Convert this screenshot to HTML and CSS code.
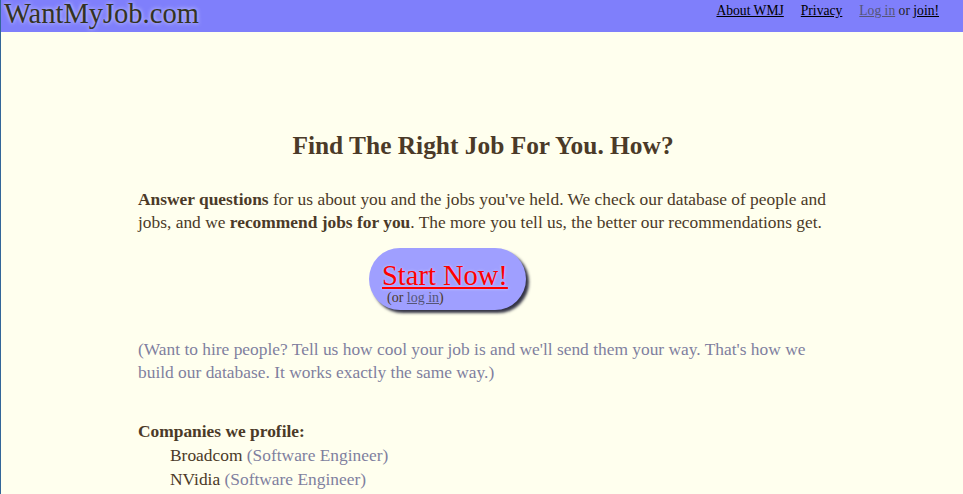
FILE: index.html
```html
<!DOCTYPE html>
<html>
<head>
<meta charset="utf-8">
<title>WantMyJob.com</title>
<link rel="stylesheet" href="styles.css">
</head>
<body>
<header class="topbar">
  <div class="logo">WantMyJob.com</div>
  <nav class="nav">
    <a href="#" class="nav-link">About WMJ</a>
    <a href="#" class="nav-link">Privacy</a>
    <span class="nav-auth"><a href="#" class="nav-login">Log in</a> or <a href="#" class="nav-link">join!</a></span>
  </nav>
</header>
<main class="content">
  <h1 class="headline">Find The Right Job For You. How?</h1>
  <p class="intro"><b>Answer questions</b> for us about you and the jobs you've held. We check our database of people and jobs, and we <b>recommend jobs for you</b>. The more you tell us, the better our recommendations get.</p>
  <div class="cta-row">
    <div class="cta">
      <a href="#" class="cta-main">Start Now!</a>
      <div class="cta-sub">(or <a href="#" class="cta-login">log in</a>)</div>
    </div>
  </div>
  <p class="aside">(Want to hire people? Tell us how cool your job is and we'll send them your way. That's how we build our database. It works exactly the same way.)</p>
  <div class="companies">
    <div class="companies-title">Companies we profile:</div>
    <ul class="company-list">
      <li>Broadcom <span class="role">(Software Engineer)</span></li>
      <li>NVidia <span class="role">(Software Engineer)</span></li>
    </ul>
  </div>
</main>
</body>
</html>
```
FILE: styles.css
```css
html, body {
  margin: 0;
  padding: 0;
}
body {
  background: #ffffee;
  border-left: 1px solid #336699;
  min-height: 494px;
  box-sizing: border-box;
  font-family: "Liberation Serif", serif;
  color: #4b3a28;
}
.topbar {
  height: 32px;
  background: #7f7ffb;
  display: flex;
  justify-content: space-between;
  align-items: flex-start;
}
.logo {
  font-size: 28.5px;
  line-height: 27px;
  color: #333322;
  padding-left: 3px;
  text-shadow: 0 0 4px #ddddff;
}
.nav {
  display: flex;
  gap: 17px;
  font-size: 13.6px;
  line-height: 16px;
  padding-top: 3px;
  padding-right: 24px;
  color: #222;
}
.nav-link {
  color: #000;
}
.nav-login {
  color: #555577;
}
.content {
  width: 690px;
  margin: 0 auto;
  padding-left: 2px;
}
.headline {
  margin: 96px 0 0;
  text-align: center;
  font-size: 25.4px;
  line-height: 34px;
  color: #4b3a28;
}
.intro {
  margin: 26px 0 0;
  font-size: 17.4px;
  line-height: 23px;
}
.cta-row {
  display: flex;
  padding-left: 231px;
  margin-top: 14px;
}
.cta {
  width: 157px;
  height: 62px;
  box-sizing: border-box;
  border-radius: 31px;
  background: #9f9fff;
  box-shadow: 3px 3px 3px #333344;
  padding: 13px 0 0 13px;
}
.cta-main {
  display: block;
  font-size: 28.5px;
  line-height: 29px;
  color: #ff0000;
  text-shadow: 0 0 3px #ccccff;
}
.cta-sub {
  font-size: 14px;
  line-height: 16px;
  padding-left: 5px;
  color: #4b3a28;
}
.cta-login {
  color: #555577;
}
.aside {
  margin: 28px 0 0;
  font-size: 17.4px;
  line-height: 23px;
  color: #7f7f9f;
}
.companies {
  margin-top: 35px;
  font-size: 17.4px;
  line-height: 24px;
}
.companies-title {
  font-weight: bold;
}
.company-list {
  list-style: none;
  margin: 0;
  padding-left: 32px;
}
.role {
  color: #7f7f9f;
}
```
